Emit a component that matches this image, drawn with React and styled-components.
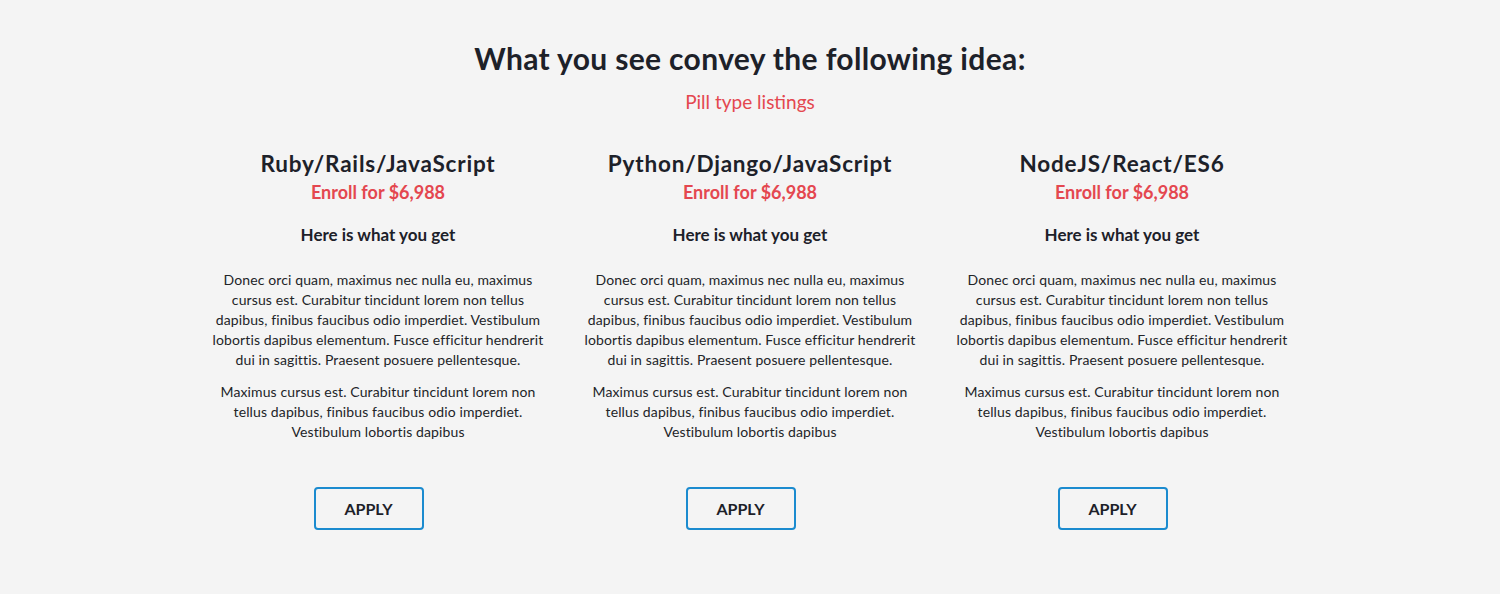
import React from "react";
import styled, { createGlobalStyle } from "styled-components";

const Global = createGlobalStyle`
  html, body { margin: 0; padding: 0; background: #f4f4f4; }
  body { font-family: "Lato", "Noto Sans", sans-serif; color: #1d2129; }
`;

const Page = styled.main`
  display: flex;
  flex-direction: column;
  align-items: center;
  padding-top: 38px;
  min-height: 594px;
  box-sizing: border-box;
`;

const Title = styled.h1`
  margin: 0;
  font-size: 30px;
  font-weight: 700;
  letter-spacing: 0.35px;
  line-height: 40px;
  color: #1d2129;
`;

const Subtitle = styled.p`
  margin: 12px 0 0;
  font-size: 19px;
  line-height: 24px;
  color: #e4474f;
`;

const Grid = styled.div`
  display: grid;
  grid-template-columns: repeat(3, 372px);
  margin-top: 35px;
`;

const Column = styled.section`
  display: flex;
  flex-direction: column;
  align-items: center;
  text-align: center;
  padding: 0 16px;
`;

const Course = styled.h2`
  margin: 0;
  font-size: 22.5px;
  letter-spacing: 0.8px;
  line-height: 30px;
  font-weight: 700;
`;

const Price = styled.div`
  font-size: 18px;
  line-height: 26px;
  font-weight: 700;
  color: #e4474f;
`;

const Lead = styled.h3`
  margin: 18px 0 0;
  font-size: 17px;
  line-height: 24px;
  font-weight: 700;
`;

const Text = styled.p`
  margin: ${(p) => (p.$first ? "23px" : "12px")} 0 0;
  font-size: 14px;
  letter-spacing: 0.12px;
  line-height: 20px;
  width: 338px;
  color: #222428;
`;

const Apply = styled.button`
  margin: 45px 19px 0 0;
  width: 110px;
  height: 43px;
  border: 2px solid #1b8bcf;
  border-radius: 4px;
  background: transparent;
  font-family: inherit;
  font-size: 16px;
  font-weight: 700;
  color: #1d2129;
  cursor: pointer;
`;

const courses = [
  "Ruby/Rails/JavaScript",
  "Python/Django/JavaScript",
  "NodeJS/React/ES6",
];

export default function App() {
  return (
    <>
      <Global />
      <Page>
        <Title>What you see convey the following idea:</Title>
        <Subtitle>Pill type listings</Subtitle>
        <Grid>
          {courses.map((c) => (
            <Column key={c}>
              <Course>{c}</Course>
              <Price>Enroll for $6,988</Price>
              <Lead>Here is what you get</Lead>
              <Text $first>
                Donec orci quam, maximus nec nulla eu, maximus cursus est. Curabitur tincidunt lorem non tellus dapibus, finibus faucibus odio imperdiet. Vestibulum lobortis dapibus elementum. Fusce efficitur hendrerit dui in sagittis. Praesent posuere pellentesque.
              </Text>
              <Text>
                Maximus cursus est. Curabitur tincidunt lorem non tellus dapibus, finibus faucibus odio imperdiet. Vestibulum lobortis dapibus
              </Text>
              <Apply>APPLY</Apply>
            </Column>
          ))}
        </Grid>
      </Page>
    </>
  );
}
